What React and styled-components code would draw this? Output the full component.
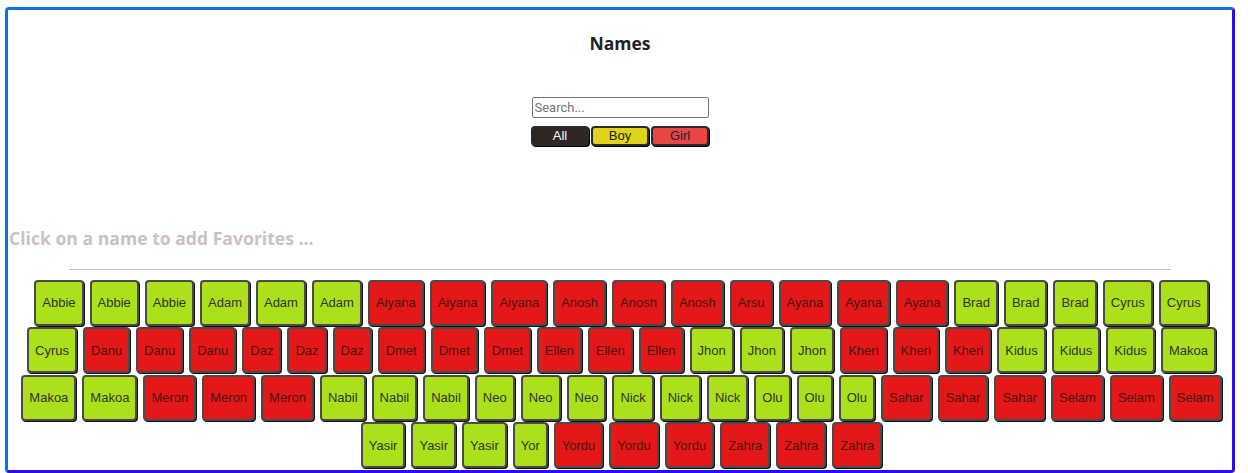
import React from 'react';
import styled, {createGlobalStyle} from "styled-components";

const groups = [
    ['Abbie', 'boy'], ['Adam', 'boy'], ['Aiyana', 'girl'], ['Anosh', 'girl'],
    ['Arsu', 'girl', 1], ['Ayana', 'girl'], ['Brad', 'boy'], ['Cyrus', 'boy'],
    ['Danu', 'girl'], ['Daz', 'girl'], ['Dmet', 'girl'], ['Ellen', 'girl'],
    ['Jhon', 'boy'], ['Kheri', 'girl'], ['Kidus', 'boy'], ['Makoa', 'boy'],
    ['Meron', 'girl'], ['Nabil', 'boy'], ['Neo', 'boy'], ['Nick', 'boy'],
    ['Olu', 'boy'], ['Sahar', 'girl'], ['Selam', 'girl'], ['Yasir', 'boy'],
    ['Yor', 'boy', 1], ['Yordu', 'girl'], ['Zahra', 'girl'],
];

const names = groups.flatMap(([name, sex, count = 3]) =>
    Array.from({length: count}, () => ({name, sex}))
);

const App = () => {
    return (
        <>
            <GlobalStyle/>
            <Frame>
                <Title>Names</Title>
                <Controls>
                    <Search placeholder="Search..."/>
                    <Filters>
                        <Filter kind="all">All</Filter>
                        <Filter kind="boy">Boy</Filter>
                        <Filter kind="girl">Girl</Filter>
                    </Filters>
                </Controls>
                <Hint>Click on a name to add Favorites ...</Hint>
                <Divider/>
                <List>
                    {names.map((item, i) => (
                        <Name key={i} sex={item.sex}>{item.name}</Name>
                    ))}
                </List>
            </Frame>
        </>
    )
};

const GlobalStyle = createGlobalStyle`
  html, body {
    margin: 0;
    padding: 0;
    background: #fff;
    overflow: hidden;
  }
  body {
    font-family: "Liberation Sans", Arial, sans-serif;
  }
`;

const Frame = styled.div`
  box-sizing: border-box;
  width: 1230px;
  height: 466px;
  margin: 7px 0 0 5px;
  border: 3px solid;
  border-color: #0b6fe9 #2a0bf6 #2a0bf6 #0b6fe9;
  border-radius: 4px;
  display: flex;
  flex-direction: column;
  align-items: center;
`;

const Title = styled.h2`
  margin: 21px 0 0;
  font-family: "Open Sans", "Noto Sans", sans-serif;
  font-size: 17.5px;
  font-weight: 700;
  line-height: 24px;
  color: #222;
`;

const Controls = styled.div`
  display: flex;
  flex-direction: column;
  align-items: center;
  gap: 8px;
  margin-top: 42px;
`;

const Search = styled.input`
  box-sizing: border-box;
  width: 177px;
  height: 21px;
  padding: 1px 2px;
  border: 1px solid #767676;
  border-radius: 2px;
  font-family: Roboto, "Liberation Sans", sans-serif;
  font-size: 13px;
  color: #222;
  &::placeholder {
    color: #757575;
  }
`;

const filterColors = {
    all: ['#2e2622', '#fff'],
    boy: ['#e0d418', '#222'],
    girl: ['#e84646', '#222'],
};

const Filters = styled.div`
  display: flex;
  gap: 2px;
`;

const Filter = styled.button`
  box-sizing: border-box;
  width: 58px;
  height: 20px;
  padding: 0;
  border: 2px solid #2a2a2a;
  border-radius: 4px;
  box-shadow: 1px 1px 0 #000;
  background: ${p => filterColors[p.kind][0]};
  color: ${p => filterColors[p.kind][1]};
  font-family: "Liberation Sans", Arial, sans-serif;
  font-size: 13px;
  line-height: 16px;
  cursor: pointer;
`;

const Hint = styled.div`
  align-self: flex-start;
  margin: 81px 0 0 1px;
  font-family: "Open Sans", "Noto Sans", sans-serif;
  font-size: 17.6px;
  font-weight: 700;
  line-height: 22px;
  color: #cbc1c1;
`;

const Divider = styled.hr`
  width: 90%;
  margin: 20px 0 9px;
  border: none;
  border-top: 1px solid #c4c4c4;
  height: 0;
`;

const List = styled.div`
  box-sizing: border-box;
  display: flex;
  flex-wrap: wrap;
  justify-content: center;
  align-content: flex-start;
  width: 100%;
  padding-left: 3px;
`;

const Name = styled.div`
  box-sizing: border-box;
  display: flex;
  align-items: center;
  justify-content: center;
  height: 46px;
  margin: 0.75px 3px;
  padding: 0 6px;
  border: 2px solid #4a4a4a;
  border-radius: 4px;
  box-shadow: 1px 1px 0 #111;
  background: ${p => p.sex === 'boy' ? '#ace01a' : '#e41818'};
  color: ${p => p.sex === 'boy' ? '#333' : '#4a1414'};
  font-size: 13px;
  cursor: pointer;
`;

export default App;
